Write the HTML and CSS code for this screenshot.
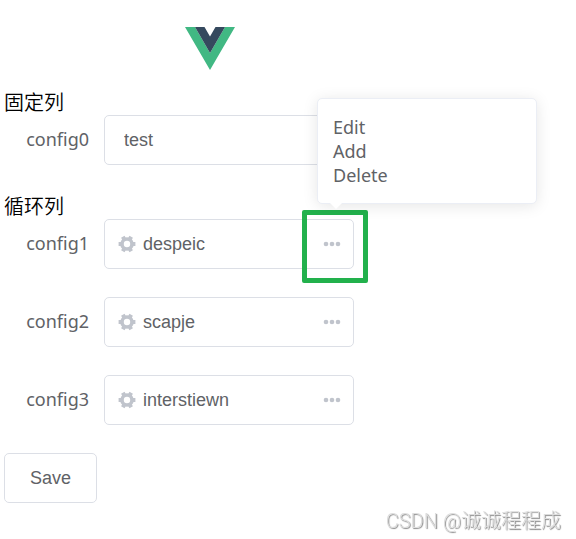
FILE: index.html
```html
<!DOCTYPE html>
<html lang="zh">
<head>
  <meta charset="UTF-8">
  <meta name="viewport" content="width=device-width, initial-scale=1.0">
  <title>Config</title>
  <link rel="stylesheet" href="styles.css">
</head>
<body>
  <svg class="sprite" aria-hidden="true">
    <symbol id="icon-gear" viewBox="0 0 18 18">
      <g fill="none" stroke="#c0c4cc">
        <circle cx="9" cy="9" r="5" stroke-width="3.600"/>
        <path stroke-width="4" d="M.6 9h3M14.400 9h3M4.800 1.700l1.500 2.600M11.700 13.700l1.500 2.600M13.200 1.700l-1.500 2.600M6.300 13.700l-1.500 2.600"/>
      </g>
    </symbol>
    <symbol id="icon-more" viewBox="0 0 18 18">
      <circle cx="3" cy="9" r="2.300"/>
      <circle cx="9" cy="9" r="2.300"/>
      <circle cx="15" cy="9" r="2.300"/>
    </symbol>
  </svg>

  <main class="app">
    <svg class="logo" viewBox="0 0 50 43" role="img" aria-label="Vue">
      <path fill="#41b883" d="M0 0h10l15 26L40 0h10L25 43z"/>
      <path fill="#35495e" d="M10 0h9.500L25 9.500 30.500 0H40L25 26z"/>
    </svg>

    <form class="form">
      <h2 class="title">固定列</h2>
      <div class="form-item">
        <label class="label" for="config0">config0</label>
        <div class="field">
          <input class="input" type="text" id="config0" value="test">
        </div>
      </div>

      <h2 class="title">循环列</h2>
      <div class="form-item">
        <label class="label" for="config1">config1</label>
        <div class="field field-icon">
          <svg class="icon"><use href="#icon-gear"/></svg>
          <input class="input" type="text" id="config1" value="despeic">
          <button class="more" type="button" aria-label="More"><svg class="icon"><use href="#icon-more"/></svg></button>
          <div class="highlight"></div>
          <div class="popover">
            <button class="popover-item" type="button">Edit</button>
            <button class="popover-item" type="button">Add</button>
            <button class="popover-item" type="button">Delete</button>
          </div>
        </div>
      </div>
      <div class="form-item">
        <label class="label" for="config2">config2</label>
        <div class="field field-icon">
          <svg class="icon"><use href="#icon-gear"/></svg>
          <input class="input" type="text" id="config2" value="scapje">
          <button class="more" type="button" aria-label="More"><svg class="icon"><use href="#icon-more"/></svg></button>
        </div>
      </div>
      <div class="form-item">
        <label class="label" for="config3">config3</label>
        <div class="field field-icon">
          <svg class="icon"><use href="#icon-gear"/></svg>
          <input class="input" type="text" id="config3" value="interstiewn">
          <button class="more" type="button" aria-label="More"><svg class="icon"><use href="#icon-more"/></svg></button>
        </div>
      </div>

      <button class="save" type="button">Save</button>
    </form>
  </main>

  <div class="watermark">CSDN @诚诚程程成</div>
</body>
</html>
```

FILE: styles.css
```css
* {
  box-sizing: border-box;
}

body {
  margin: 0;
  background: #fff;
  font-family: "Noto Sans", "Noto Sans CJK SC", sans-serif;
  color: #606266;
}

.sprite {
  position: absolute;
  width: 0;
  height: 0;
}

.app {
  max-width: 420px;
  padding: 27px 4px 0;
}

.logo {
  display: block;
  width: 50px;
  height: 43px;
  margin: 0 auto 20px;
}

.form {
  max-width: 350px;
}

.title {
  margin: 0;
  padding-bottom: 1px;
  font-family: "Noto Sans CJK SC", sans-serif;
  font-size: 20px;
  font-weight: 350;
  line-height: 24px;
  color: #000;
}

.form-item {
  display: flex;
  align-items: center;
  margin-bottom: 28px;
}

.form-item:has(+ .title) {
  margin-bottom: 29px;
}

.label {
  flex: none;
  width: 100px;
  padding: 0 15px 2px 0;
  font-size: 18px;
  line-height: 24px;
  text-align: right;
}

.field {
  position: relative;
  flex: 1;
  display: flex;
  align-items: center;
  gap: 7px;
  min-width: 0;
  height: 50px;
  padding: 0 19px;
  border: 1px solid #dcdfe6;
  border-radius: 5px;
}

.field-icon {
  padding: 0 12px 0 13px;
}

.input {
  flex: 1;
  min-width: 0;
  padding: 0;
  border: none;
  outline: none;
  background: none;
  font-family: "Liberation Sans", Arial, sans-serif;
  font-size: 18px;
  color: #606266;
}

.icon {
  display: block;
  flex: none;
  width: 18px;
  height: 18px;
  fill: #c0c4cc;
}

.more {
  padding: 0;
  border: none;
  background: none;
  cursor: pointer;
}

.highlight {
  position: absolute;
  top: -10px;
  right: -15px;
  width: 66px;
  height: 73px;
  border: 5px solid #22b14c;
  border-radius: 2px;
  pointer-events: none;
}

.popover {
  position: absolute;
  left: 212px;
  bottom: 64px;
  z-index: 1;
  width: 220px;
  padding: 16px 15px;
  border: 1px solid #ebeef5;
  border-radius: 5px;
  background: #fff;
  box-shadow: 0 2px 15px rgba(0, 0, 0, 0.1);
}

.popover::after {
  content: "";
  position: absolute;
  left: 12px;
  top: 100%;
  border: 6px solid transparent;
  border-top-color: #fff;
  border-bottom: none;
}

.popover-item {
  display: block;
  padding: 0;
  border: none;
  background: none;
  font-family: inherit;
  font-size: 18px;
  line-height: 24px;
  color: #606266;
  cursor: pointer;
}

.save {
  height: 50px;
  padding: 0 25px;
  border: 1px solid #dcdfe6;
  border-radius: 5px;
  background: #fff;
  font-family: "Liberation Sans", Arial, sans-serif;
  font-size: 18px;
  color: #606266;
  cursor: pointer;
}

.watermark {
  position: fixed;
  right: 15px;
  bottom: 6px;
  font-family: Roboto, "Noto Sans CJK SC", sans-serif;
  font-size: 20px;
  font-weight: 300;
  line-height: 24px;
  color: #ddd;
  text-shadow: 1px 1px 1px #888;
}
```
